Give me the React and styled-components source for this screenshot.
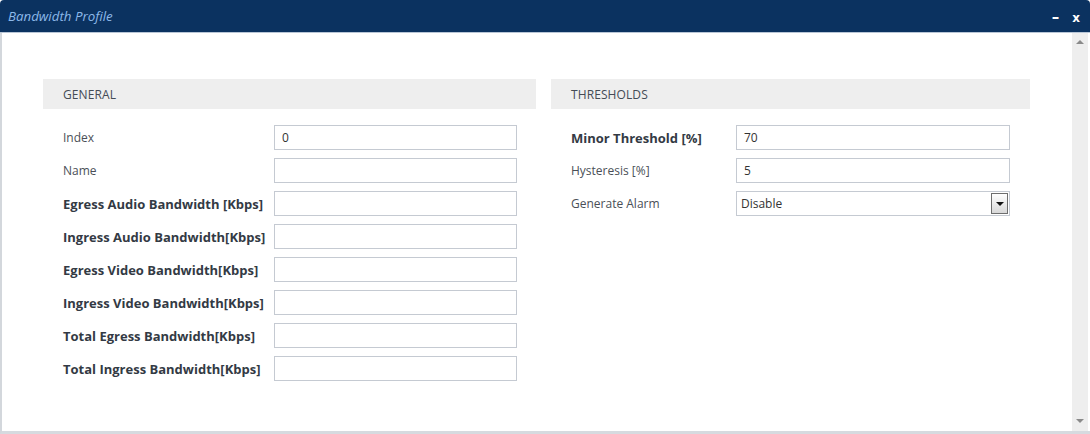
import React from "react";
import styled, { createGlobalStyle } from "styled-components";

const GlobalStyle = createGlobalStyle`
  html, body {
    margin: 0;
    padding: 0;
    background: #ffffff;
  }
  body {
    font-family: "Open Sans", "Liberation Sans", sans-serif;
    color: #333333;
  }
`;

const Window = styled.div`
  width: 1090px;
  height: 434px;
  display: flex;
  flex-direction: column;
  background: #ffffff;
  box-sizing: border-box;
`;

const TitleBar = styled.div`
  height: 33px;
  flex: none;
  display: flex;
  align-items: center;
  justify-content: space-between;
  background: #0b3260;
  border-radius: 4px 4px 0 0;
  border-bottom: 1px solid #b9c6d6;
  box-sizing: border-box;
  padding: 0 8px 1px 8px;
`;

const Title = styled.span`
  font-size: 13.3px;
  font-style: italic;
  color: #8db9ea;
`;

const Controls = styled.div`
  display: flex;
  align-items: center;
  gap: 13px;
  padding-top: 4px;
  padding-right: 2px;
`;

const ControlButton = styled.span`
  color: #ffffff;
  font-family: "DejaVu Sans", "Liberation Sans", sans-serif;
  font-weight: bold;
  font-size: ${(p) => p.size || 12}px;
  line-height: 1;
`;

const Body = styled.div`
  flex: 1;
  display: flex;
  border-left: 2px solid #d3d7dc;
  border-bottom: 3px solid #d6dadf;
  min-height: 0;
`;

const Content = styled.div`
  flex: 1;
  display: flex;
  align-items: flex-start;
  gap: 15px;
  padding: 46px 0 0 41px;
`;

const Section = styled.div`
  width: ${(p) => p.width}px;
  display: flex;
  flex-direction: column;
`;

const SectionHeader = styled.div`
  height: 30px;
  background: #eeeeee;
  display: flex;
  align-items: center;
  padding-left: 20px;
  font-size: 12px;
  color: #444b55;
  letter-spacing: 0.1px;
`;

const Rows = styled.div`
  display: flex;
  flex-direction: column;
  gap: 8px;
  padding: 16px 0 0 20px;
`;

const Row = styled.div`
  display: flex;
  align-items: center;
  height: 25px;
`;

const Label = styled.span`
  width: ${(p) => p.width}px;
  flex: none;
  font-size: ${(p) => (p.bold ? 13 : 12)}px;
  font-weight: ${(p) => (p.bold ? 700 : 400)};
  color: ${(p) => (p.bold ? "#333a44" : "#4a4f57")};
  white-space: nowrap;
`;

const Input = styled.div`
  width: ${(p) => p.width}px;
  height: 25px;
  box-sizing: border-box;
  border: 1px solid #c5cad2;
  background: #ffffff;
  display: flex;
  align-items: center;
  padding-left: 7px;
  font-size: 12px;
  color: #333333;
`;

const Select = styled(Input)`
  justify-content: space-between;
  padding-right: 1px;
  padding-left: 4px;
`;

const SelectButton = styled.span`
  width: 17px;
  height: 21px;
  box-sizing: border-box;
  border: 1px solid #6e6e6e;
  background: linear-gradient(#ffffff, #d8d8d8);
  display: flex;
  align-items: center;
  justify-content: center;

  &::after {
    content: "";
    border-left: 4px solid transparent;
    border-right: 4px solid transparent;
    border-top: 4px solid #111111;
  }
`;

const Scrollbar = styled.div`
  width: 16px;
  flex: none;
  margin-right: 2px;
  background: #eeeeee;
  display: flex;
  flex-direction: column;
  justify-content: space-between;
  align-items: center;
  padding: 7px 0 8px 0;
  box-sizing: border-box;
`;

const Arrow = styled.span`
  width: 0;
  height: 0;
  border-left: 4px solid transparent;
  border-right: 4px solid transparent;
  ${(p) =>
    p.up
      ? "border-bottom: 4px solid #8a8a8a;"
      : "border-top: 4px solid #8a8a8a;"}
`;

const general = [
  { label: "Index", value: "0" },
  { label: "Name", value: "" },
  { label: "Egress Audio Bandwidth [Kbps]", bold: true },
  { label: "Ingress Audio Bandwidth[Kbps]", bold: true },
  { label: "Egress Video Bandwidth[Kbps]", bold: true },
  { label: "Ingress Video Bandwidth[Kbps]", bold: true },
  { label: "Total Egress Bandwidth[Kbps]", bold: true },
  { label: "Total Ingress Bandwidth[Kbps]", bold: true },
];

const thresholds = [
  { label: "Minor Threshold [%]", value: "70", bold: true },
  { label: "Hysteresis [%]", value: "5" },
];

const App = () => (
  <>
    <GlobalStyle />
    <Window>
      <TitleBar>
        <Title>Bandwidth Profile</Title>
        <Controls>
          <ControlButton size={15}>–</ControlButton>
          <ControlButton size={12}>x</ControlButton>
        </Controls>
      </TitleBar>
      <Body>
        <Content>
          <Section width={493}>
            <SectionHeader>GENERAL</SectionHeader>
            <Rows>
              {general.map((f) => (
                <Row key={f.label}>
                  <Label width={211} bold={f.bold}>
                    {f.label}
                  </Label>
                  <Input width={243}>{f.value}</Input>
                </Row>
              ))}
            </Rows>
          </Section>
          <Section width={479}>
            <SectionHeader>THRESHOLDS</SectionHeader>
            <Rows>
              {thresholds.map((f) => (
                <Row key={f.label}>
                  <Label width={165} bold={f.bold}>
                    {f.label}
                  </Label>
                  <Input width={274}>{f.value}</Input>
                </Row>
              ))}
              <Row>
                <Label width={165}>Generate Alarm</Label>
                <Select width={274}>
                  Disable
                  <SelectButton />
                </Select>
              </Row>
            </Rows>
          </Section>
        </Content>
        <Scrollbar>
          <Arrow up />
          <Arrow />
        </Scrollbar>
      </Body>
    </Window>
  </>
);

export default App;
